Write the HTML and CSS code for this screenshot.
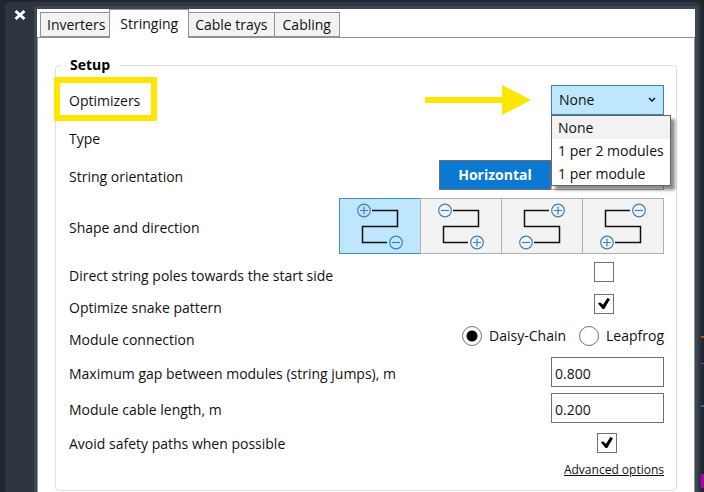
FILE: index.html
```
<!DOCTYPE html>
<html lang="en">
<head>
    <meta charset="UTF-8">
    <meta name="viewport" content="width=device-width, initial-scale=1.0">
    <title>Stringing</title>
    <link rel="stylesheet" href="styles.css">
</head>
<body>
    <div class="palette">
        <div class="side">
            <button class="close" type="button" aria-label="Close">
                <svg width="12" height="12" viewBox="0 0 12 12"><path d="M1.500 2L10.500 10M10.500 2L1.500 10" stroke="#fff" stroke-width="3"/></svg>
            </button>
        </div>
        <main class="panel">
            <nav class="tabs">
                <button class="tab" type="button">Inverters</button>
                <button class="tab active" type="button">Stringing</button>
                <button class="tab" type="button">Cable trays</button>
                <button class="tab" type="button">Cabling</button>
            </nav>
            <form class="page">
                <fieldset class="setup">
                    <legend>Setup</legend>

                    <div class="row">
                        <label for="optimizers">Optimizers</label>
                        <div class="marker"></div>
                        <svg class="arrow" width="106" height="30" viewBox="0 0 106 30"><path d="M0 12H77V0L106 15L77 30V18H0Z" fill="#ffe600"/></svg>
                        <div class="combo">
                            <select id="optimizers">
                                <option>None</option>
                            </select>
                            <svg class="chevron" width="8" height="6" viewBox="0 0 8 6"><path d="M1 1L4 4L7 1" fill="none" stroke="#111" stroke-width="1.5"/></svg>
                            <ul class="menu">
                                <li class="current">None</li>
                                <li>1 per 2 modules</li>
                                <li>1 per module</li>
                            </ul>
                        </div>
                    </div>

                    <div class="row">
                        <span>Type</span>
                    </div>

                    <div class="row">
                        <span>String orientation</span>
                        <div class="toggle">
                            <button class="selected" type="button">Horizontal</button>
                            <button type="button" aria-label="Other orientation"></button>
                        </div>
                    </div>

                    <div class="row tall">
                        <span>Shape and direction</span>
                        <div class="shapes">
                            <button class="selected" type="button" aria-label="Plus top left">
                                <svg width="80" height="54" viewBox="0 0 80 54">
                                    <path class="wire" d="M32 11.500H57.500V27.500H22.500V43.500H47"/>
                                    <circle cx="24" cy="11.500" r="6.300"/><path class="sign" d="M20 11.500H28M24 7.500V15.500"/>
                                    <circle cx="56" cy="43.500" r="6.300"/><path class="sign" d="M52 43.500H60"/>
                                </svg>
                            </button>
                            <button type="button" aria-label="Minus top left">
                                <svg width="80" height="54" viewBox="0 0 80 54">
                                    <path class="wire" d="M32 11.500H57.500V27.500H22.500V43.500H47"/>
                                    <circle cx="24" cy="11.500" r="6.300"/><path class="sign" d="M20 11.500H28"/>
                                    <circle cx="56" cy="43.500" r="6.300"/><path class="sign" d="M52 43.500H60M56 39.500V47.500"/>
                                </svg>
                            </button>
                            <button type="button" aria-label="Plus top right">
                                <svg width="80" height="54" viewBox="0 0 80 54">
                                    <path class="wire" d="M47 11.500H22.500V27.500H57.500V43.500H32"/>
                                    <circle cx="56" cy="11.500" r="6.300"/><path class="sign" d="M52 11.500H60M56 7.500V15.500"/>
                                    <circle cx="24" cy="43.500" r="6.300"/><path class="sign" d="M20 43.500H28"/>
                                </svg>
                            </button>
                            <button type="button" aria-label="Minus top right">
                                <svg width="80" height="54" viewBox="0 0 80 54">
                                    <path class="wire" d="M47 11.500H22.500V27.500H57.500V43.500H32"/>
                                    <circle cx="56" cy="11.500" r="6.300"/><path class="sign" d="M52 11.500H60"/>
                                    <circle cx="24" cy="43.500" r="6.300"/><path class="sign" d="M20 43.500H28M24 39.500V47.500"/>
                                </svg>
                            </button>
                        </div>
                    </div>

                    <div class="row short">
                        <label for="poles">Direct string poles towards the start side</label>
                        <input class="check" type="checkbox" id="poles">
                    </div>

                    <div class="row short">
                        <label for="snake">Optimize snake pattern</label>
                        <input class="check" type="checkbox" id="snake" checked>
                    </div>

                    <div class="row short">
                        <span>Module connection</span>
                        <div class="radios">
                            <label><input type="radio" name="connection" checked>Daisy-Chain</label>
                            <label><input type="radio" name="connection">Leapfrog</label>
                        </div>
                    </div>

                    <div class="row field">
                        <label for="gap">Maximum gap between modules (string jumps), m</label>
                        <input class="number" type="text" id="gap" value="0.800">
                    </div>

                    <div class="row field">
                        <label for="cable">Module cable length, m</label>
                        <input class="number" type="text" id="cable" value="0.200">
                    </div>

                    <div class="row short last">
                        <label for="safety">Avoid safety paths when possible</label>
                        <input class="check" type="checkbox" id="safety" checked>
                    </div>

                    <div class="more">
                        <a href="#">Advanced options</a>
                    </div>
                </fieldset>
            </form>
        </main>
    </div>
</body>
</html>
```
FILE: styles.css
```
* {
    box-sizing: border-box;
}

body {
    margin: 0;
    padding: 2px 3px 0 5px;
    /* bits of the drawing behind the palette */
    background:
        linear-gradient(#b0560a, #b0560a) right 0 top 336px / 3px 2px no-repeat,
        linear-gradient(#d400d4, #d400d4) right 0 top 363px / 3px 1px no-repeat,
        linear-gradient(#0b7fa8, #0b7fa8) right 0 top 405px / 3px 2px no-repeat,
        linear-gradient(#b000b0, #b000b0) right 0 top 474px / 3px 14px no-repeat,
        #20262f;
    color: #111;
    font-family: "Open Sans", "Noto Sans", sans-serif;
    font-size: 14px;
    line-height: 20px;
}

button,
input,
select {
    font: inherit;
    color: inherit;
    margin: 0;
}

.palette {
    display: flex;
    min-height: calc(100vh - 2px);
    padding-right: 3px;
    background-color: #2e3440;
    border-radius: 4px 4px 0 0;
}

.side {
    flex: 0 0 29px;
    padding: 7px 0 0 9px;
}

.close {
    display: block;
    width: 12px;
    height: 12px;
    padding: 0;
    border: 0;
    background: none;
}

.close svg {
    display: block;
}

.panel {
    flex: 1;
    display: flex;
    flex-direction: column;
    margin-top: 4px;
    border: solid #3c4657;
    border-width: 3px 3px 0;
    border-radius: 3px 3px 0 0;
    background-color: #fff;
}

.tabs {
    display: flex;
    align-items: flex-end;
    height: 28px;
    padding-left: 3px;
}

.tab {
    height: 25px;
    padding: 0 6px;
    border: 1px solid #8f9296;
    margin-right: -1px;
    background-color: #f2f2f2;
    line-height: 20px;
    white-space: nowrap;
}

.tab.active {
    position: relative;
    height: 29px;
    padding: 0 10px 1px;
    margin: 0 -1px -1px -2px;
    border-bottom: 0;
    background-color: #fff;
}

.tab:last-child {
    padding: 0 8px;
}

.page {
    flex: 1;
    padding: 17px 17px 1px;
    border: 1px solid #8f9296;
    border-bottom: 0;
}

.setup {
    min-width: 0;
    margin: 0;
    padding: 7px 12px 10px 13px;
    border: 1px solid #dfdfdf;
    border-radius: 4px;
}

.setup legend {
    margin-left: -8px;
    padding: 0 10px 0 9px;
    font-weight: bold;
    color: #000;
}

.row {
    position: relative;
    display: flex;
    justify-content: space-between;
    align-items: center;
    height: 38px;
}

.row.tall {
    height: 64px;
}

.row.short {
    height: 32px;
}

.row.field {
    height: 36px;
}

/* yellow callouts */
.marker {
    position: absolute;
    left: -15px;
    top: -5px;
    width: 103px;
    height: 44px;
    border: 6px solid #ffe600;
}

.arrow {
    position: absolute;
    right: 133px;
    top: 3px;
}

.combo {
    position: relative;
    width: 113px;
    margin-bottom: 2px;
}

.combo select {
    display: block;
    width: 100%;
    height: 30px;
    padding: 0 7px;
    appearance: none;
    border: 1px solid #3c7fb1;
    border-radius: 0;
    background-color: #bee6fd;
}

.chevron {
    position: absolute;
    right: 8px;
    top: 12px;
}

.menu {
    position: absolute;
    z-index: 1;
    left: 0;
    top: 30px;
    width: 120px;
    margin: 0;
    padding: 0;
    border: 1px solid #646464;
    background-color: #fff;
    box-shadow: 4px 4px 3px rgba(0, 0, 0, 0.45);
    list-style: none;
    line-height: 23px;
    white-space: nowrap;
}

.menu li {
    height: 23px;
    padding-left: 6px;
}

.menu .current {
    background-color: #f2f2f2;
}

.toggle {
    display: flex;
    margin-bottom: 4px;
}

.toggle button {
    width: 113px;
    height: 30px;
    border: 1px solid #acacac;
    background-color: #fff;
}

.toggle button.selected {
    width: 112px;
    border: 1px solid #707070;
    background-color: #0b78d1;
    color: #fff;
    font-weight: bold;
}

.shapes {
    display: flex;
    margin-bottom: 4px;
}

.shapes button {
    width: 82px;
    height: 56px;
    margin-left: -1px;
    padding: 0;
    border: 1px solid #b0b0b0;
    background-color: #f3f3f3;
}

.shapes button.selected {
    border-color: #4a8dc0;
    background-color: #bee6fd;
}

.shapes svg {
    display: block;
    fill: none;
}

.wire {
    stroke: #111;
    stroke-width: 1.5;
}

.shapes circle,
.sign {
    stroke: #3c82b8;
    stroke-width: 1.2;
}

.check {
    appearance: none;
    width: 20px;
    height: 20px;
    margin: 0 50px 8px 0;
    border: 1px solid #707070;
    background-color: #fff;
}

.check:checked::before {
    content: "";
    display: block;
    width: 12px;
    height: 11px;
    margin: 3px 0 0 3px;
    background-color: #000;
    clip-path: polygon(0 50%, 16% 38%, 42% 62%, 78% 0, 100% 12%, 52% 100%, 38% 100%);
}

.last .check {
    margin: 0 47px 2px 0;
}

.radios {
    display: flex;
    gap: 13px;
    margin-bottom: 8px;
}

.radios label {
    display: flex;
    align-items: center;
    gap: 7px;
}

.radios input {
    appearance: none;
    width: 20px;
    height: 20px;
    border: 1px solid #707070;
    border-radius: 50%;
    background-color: #fff;
}

.radios input:checked {
    background-image: radial-gradient(circle, #000 5px, transparent 6px);
}

.number {
    width: 113px;
    height: 30px;
    margin-bottom: 4px;
    padding: 2px 3px 0;
    border: 1px solid #707070;
    background-color: #fff;
}

.more {
    text-align: right;
    font-size: 12px;
}

.more a {
    color: #111;
}
```
